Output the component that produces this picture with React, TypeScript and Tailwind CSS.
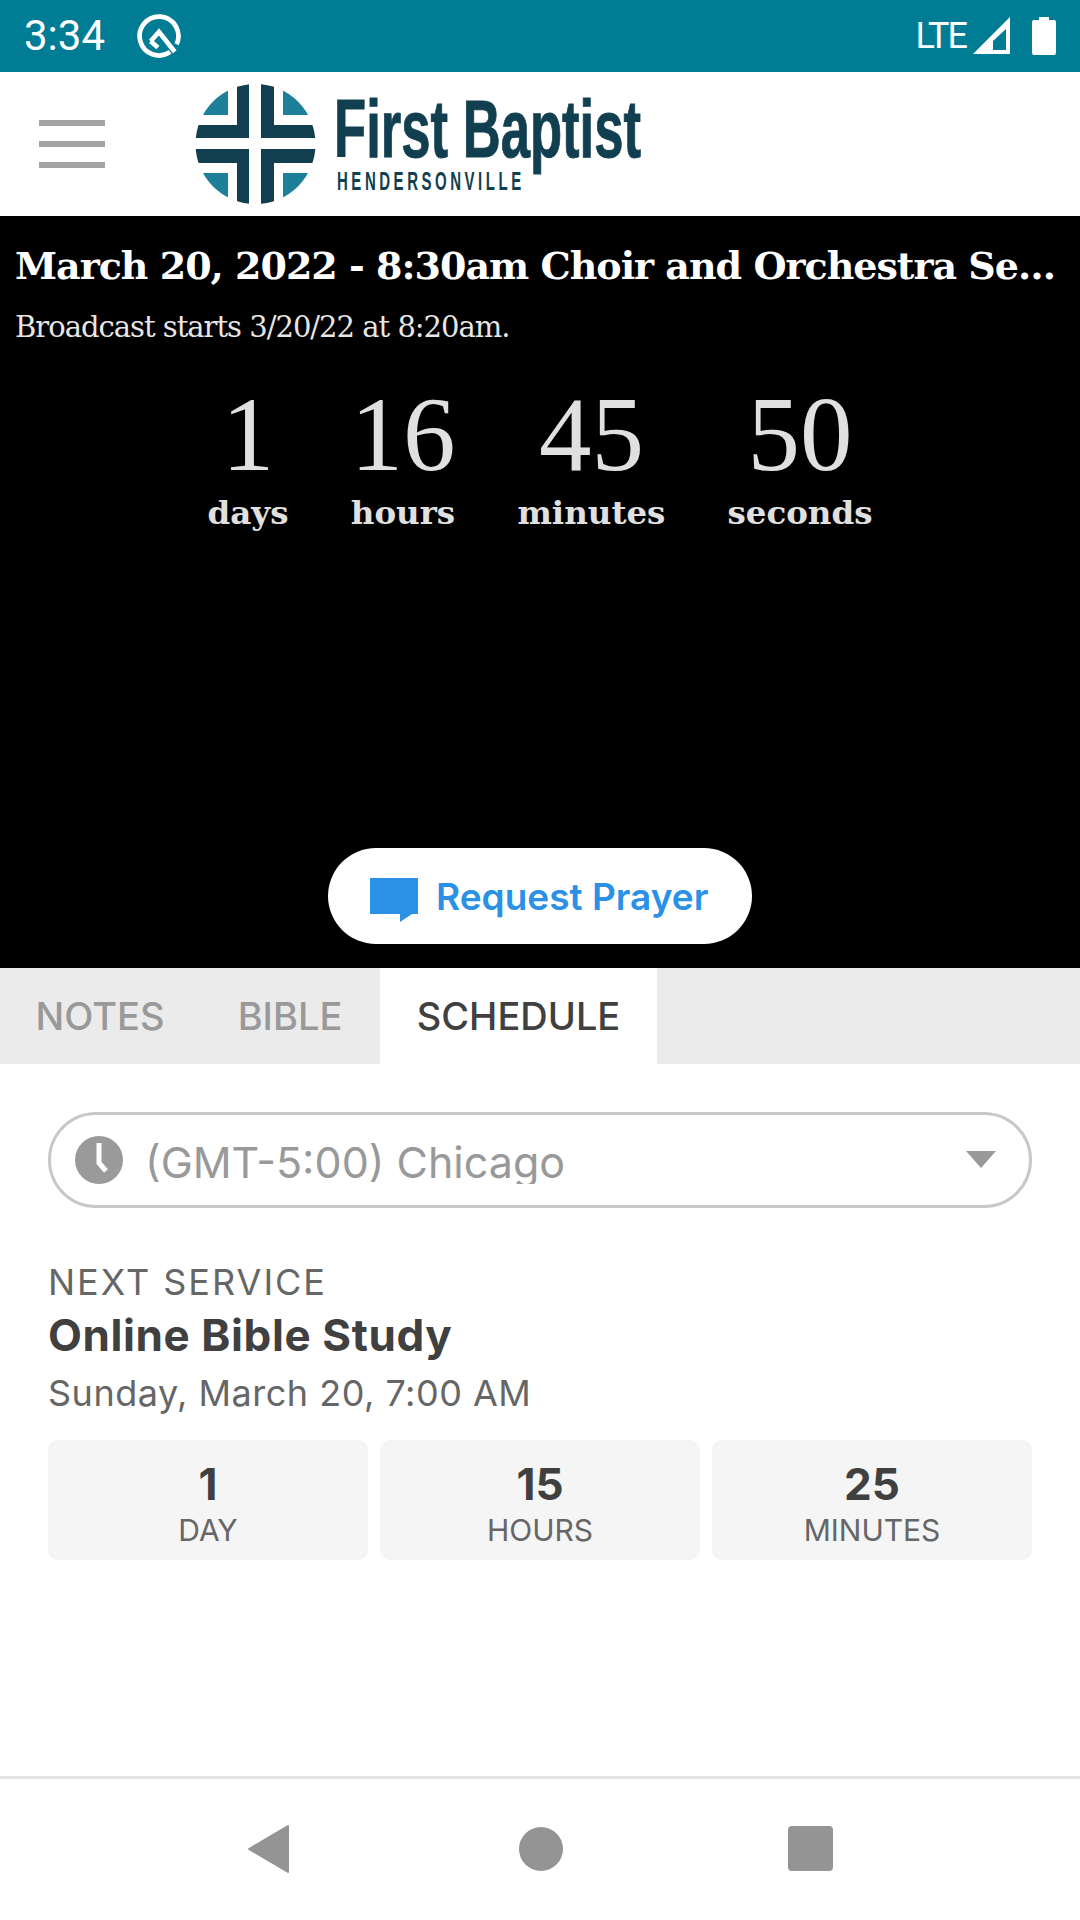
import React from "react";

const SERIF = "font-['DejaVu_Serif','Liberation_Serif',serif]";

function Logo() {
  return (
    <svg width="460" height="120" viewBox="0 0 460 120" className="block">
      <defs>
        <clipPath id="disc"><circle cx="60.5" cy="60" r="60" /></clipPath>
      </defs>
      <g clipPath="url(#disc)">
        <path fill="#123f50" d="M42 0h12v54H0V41h42zM79 0h-13v54h55V41H79zM42 120h12V65H0v14h42zM79 120H66V65h55v14H79z" />
        <path fill="#1d7f9a" d="M0 0h33v31H0zM88 0h33v31H88zM0 89h33v31H0zM88 89h33v31H88z" />
      </g>
      <text x="139" y="73" fontFamily="'Liberation Sans',sans-serif" fontWeight="700" fontSize="81" fill="#123f50" stroke="#123f50" strokeWidth="1" textLength="307" lengthAdjust="spacingAndGlyphs">First Baptist</text>
      <text transform="translate(142 106) scale(0.6 1)" fontFamily="'Liberation Sans',sans-serif" fontWeight="700" fontSize="25" fill="#123f50" textLength="307" lengthAdjust="spacing">HENDERSONVILLE</text>
    </svg>
  );
}

function Unit({ n, label }: { n: string; label: string }) {
  return (
    <div className="flex flex-col items-center">
      <div className="font-['Liberation_Serif',serif] text-[105px] leading-[96px] text-[#e0e0e0]">{n}</div>
      <div className="font-['DejaVu_Serif',serif] font-bold text-[32.5px] leading-[40px] text-[#e0e0e0] mt-[10px]">{label}</div>
    </div>
  );
}

function Stat({ n, label }: { n: string; label: string }) {
  return (
    <div className="flex-1 h-[120px] rounded-[10px] bg-[#f5f5f5] flex flex-col items-center pt-[20px]">
      <div className="text-[44px] leading-[48px] font-bold text-[#404040]">{n}</div>
      <div className="text-[30px] leading-[44px] text-[#666666]">{label}</div>
    </div>
  );
}

export default function App() {
  return (
    <div className="w-[1080px] h-[1920px] bg-white flex flex-col overflow-hidden font-['Inter','Lato',sans-serif]">
      <div className="h-[72px] bg-[#007c94] flex items-center pl-[24px] pr-[24px] text-white font-['Roboto',sans-serif]">
        <span className="text-[42px] leading-none">3:34</span>
        <svg width="44" height="44" viewBox="0 0 42 42" className="ml-[32px]">
          <path d="M31.6 36.2A18.5 18.5 0 1 1 37.8 28.8" fill="none" stroke="#fff" strokeWidth="4.5" />
          <path d="M13 26l8-9 15 19M13 26l7 6" fill="none" stroke="#fff" strokeWidth="4.5" />
        </svg>
        <span className="ml-auto text-[36px] leading-none tracking-[-2px] mr-[-1px]">LTE</span>
        <svg width="38" height="38" viewBox="0 0 38 38" className="ml-[8px]">
          <path d="M37 0v37H0z" fill="#fff" />
          <path d="M33 12v21H20V24z" fill="#007c94" />
        </svg>
        <svg width="24" height="38" viewBox="0 0 24 38" className="ml-[21px]">
          <path d="M7 0h10v3h5a2 2 0 0 1 2 2v31a2 2 0 0 1-2 2H2a2 2 0 0 1-2-2V5a2 2 0 0 1 2-2h5z" fill="#fff" />
        </svg>
      </div>

      <div className="h-[144px] flex items-center bg-white">
        <div className="ml-[39px] w-[66px] flex flex-col gap-[15px]">
          <div className="h-[6px] bg-[#a3a3a3]" />
          <div className="h-[6px] bg-[#a3a3a3]" />
          <div className="h-[6px] bg-[#a3a3a3]" />
        </div>
        <div className="ml-[90px]"><Logo /></div>
      </div>

      <div className="h-[752px] bg-black flex flex-col">
        <div className={`${SERIF} mt-[26px] px-[15px] font-bold text-[38px] tracking-[-1px] leading-[48px] text-white truncate`}>
          March 20, 2022 - 8:30am Choir and Orchestra Service
        </div>
        <div className={`${SERIF} px-[15px] mt-[17px] text-[29px] tracking-[-1px] leading-[40px] text-[#e6e6e6]`}>
          Broadcast starts 3/20/22 at 8:20am.
        </div>
        <div className="flex justify-center gap-[62px] mt-[40px]">
          <Unit n="1" label="days" />
          <Unit n="16" label="hours" />
          <Unit n="45" label="minutes" />
          <Unit n="50" label="seconds" />
        </div>
        <div className="mt-auto mb-[24px] self-center w-[424px] h-[96px] rounded-full bg-white flex items-center pl-[42px]">
          <svg width="48" height="44" viewBox="0 0 48 44" className="mt-[8px]">
            <path d="M0 0h48v36H42L30 44v-8H0z" fill="#2b91e6" />
          </svg>
          <span className="ml-[18px] text-[37px] font-semibold text-[#2b91e6] leading-none">Request Prayer</span>
        </div>
      </div>

      <div className="h-[96px] bg-[#ebebeb] flex text-[38px] font-medium">
        <div className="w-[200px] flex items-center justify-center text-[#999999]">NOTES</div>
        <div className="w-[180px] flex items-center justify-center text-[#999999]">BIBLE</div>
        <div className="w-[277px] bg-white flex items-center justify-center text-[#404040]">SCHEDULE</div>
      </div>

      <div className="flex-1 px-[48px] pt-[48px]">
        <div className="h-[96px] rounded-full border-[3px] border-[#c8c8c8] flex items-center pl-[24px] pr-[33px]">
          <svg width="48" height="48" viewBox="0 0 48 48" className="shrink-0">
            <circle cx="24" cy="24" r="24" fill="#9a9a9a" />
            <path d="M24 7v20l7 8" fill="none" stroke="#fff" strokeWidth="5" />
          </svg>
          <div className="ml-[22px] h-[48px] overflow-hidden text-[43px] leading-[52px] text-[#999999]">(GMT-5:00) Chicago</div>
          <svg width="30" height="18" viewBox="0 0 30 18" className="ml-auto">
            <path d="M0 0h30L15 17z" fill="#999999" />
          </svg>
        </div>

        <div className="mt-[50px] text-[36px] tracking-[2px] leading-[48px] text-[#666666]">NEXT SERVICE</div>
        <div className="mt-[3px] text-[44px] tracking-[0.6px] leading-[52px] font-bold text-[#404040]">Online Bible Study</div>
        <div className="mt-[8px] text-[36px] tracking-[0.5px] leading-[48px] text-[#666666]">Sunday, March 20, 7:00 AM</div>
        <div className="mt-[23px] flex gap-[12px]">
          <Stat n="1" label="DAY" />
          <Stat n="15" label="HOURS" />
          <Stat n="25" label="MINUTES" />
        </div>
      </div>

      <div className="h-[144px] border-t-[3px] border-[#e3e3e3] bg-white flex items-center justify-center pb-[2px]">
        <div className="flex items-center">
          <div className="w-[42px]">
            <svg width="42" height="50" viewBox="0 0 42 50" className="block">
              <path d="M41 2v46L2 25z" fill="#949494" stroke="#949494" strokeWidth="2" strokeLinejoin="round" />
            </svg>
          </div>
          <div className="w-[44px] h-[44px] rounded-full bg-[#949494] ml-[230px]" />
          <div className="w-[45px] h-[45px] rounded-[4px] bg-[#949494] ml-[225px]" />
        </div>
      </div>
    </div>
  );
}
